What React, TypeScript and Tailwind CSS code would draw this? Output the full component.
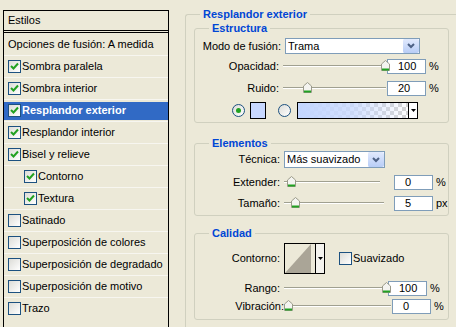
import React from "react";

const font = { fontFamily: '"Liberation Sans", Arial, sans-serif' };

function Check({ checked }: { checked: boolean }) {
  return (
    <div className="w-[13px] h-[13px] border border-[#1c5180] bg-gradient-to-br from-[#dcdcd7] to-white flex items-center justify-center shrink-0">
      {checked && (
        <svg width="9" height="9" viewBox="0 0 9 9">
          <path d="M1 4 L3.5 6.5 L8 1.5" stroke="#21a121" strokeWidth="2" fill="none" />
        </svg>
      )}
    </div>
  );
}

function Row({ label, checked, indent, active }: { label: string; checked?: boolean; indent?: boolean; active?: boolean }) {
  return (
    <div className="h-[22px] border-t border-[#f7f6f0] flex items-center">
      <div className={`h-[18px] w-full flex items-center gap-[1px] ${indent ? "pl-[20px]" : "pl-[4px]"} ${active ? "bg-[#316ac5] text-white font-bold" : "text-black"}`}>
        {checked !== undefined && <Check checked={checked} />}
        <span>{label}</span>
      </div>
    </div>
  );
}

function Thumb() {
  return (
    <svg width="9" height="11" viewBox="0 0 9 11" className="shrink-0">
      <path d="M0.5 10.5 V4 L4.5 0.5 L8.5 4 V10.5 Z" fill="#f4f4f0" stroke="#9a9a8a" />
      <path d="M1 9.5 H8" stroke="#21a121" strokeWidth="2" />
    </svg>
  );
}

function Slider({ pos, width = 105 }: { pos: number; width?: number }) {
  return (
    <div className="relative h-[12px]" style={{ width }}>
      <div className="absolute left-0 right-0 top-[5px] h-[2px] border-t border-[#a0a090] border-b border-b-white" />
      <div className="absolute top-0" style={{ left: pos }}>
        <Thumb />
      </div>
    </div>
  );
}

function Input({ value }: { value: string }) {
  return (
    <div className="w-[39px] h-[15px] bg-white border border-[#7f9db9] pl-[10px] flex items-center text-[11px] leading-none">
      {value}
    </div>
  );
}

function Arrow() {
  return (
    <div className="w-[17px] h-full bg-gradient-to-b from-[#e2eafd] to-[#b8cdf6] border-l border-white rounded-[2px] flex items-center justify-center">
      <svg width="8" height="6" viewBox="0 0 8 6">
        <path d="M1 1 L4 4 L7 1" stroke="#4d6185" strokeWidth="2" fill="none" />
      </svg>
    </div>
  );
}

function Group({ title, children, className }: { title: string; children: React.ReactNode; className?: string }) {
  return (
    <div className={`relative border border-[#d0d0bf] rounded-[3px] ${className ?? ""}`}>
      <div className="absolute left-[14px] -top-[8px] px-[3px] bg-[#ece9d8] text-[#0046d5] font-bold leading-[14px]">{title}</div>
      {children}
    </div>
  );
}

function DownTri() {
  return (
    <svg width="5" height="3" viewBox="0 0 5 3"><path d="M0 0 H5 L2.5 3 Z" fill="#000" /></svg>
  );
}

export default function App() {
  return (
    <div className="w-[456px] h-[327px] bg-[#ece9d8] overflow-hidden flex text-[11px]" style={font}>
      <div className="ml-[3px] mt-[10px] w-[166px] h-[330px] border border-black shrink-0 flex flex-col">
        <div className="h-[20px] pl-[4px] flex items-center border-b border-black">Estilos</div>
        <div className="h-[2px] border-b border-black" />
        <div className="h-[22px] pl-[4px] flex items-center">Opciones de fusión: A medida</div>
        <Row label="Sombra paralela" checked />
        <Row label="Sombra interior" checked />
        <Row label="Resplandor exterior" checked active />
        <Row label="Resplandor interior" checked />
        <Row label="Bisel y relieve" checked />
        <Row label="Contorno" checked indent />
        <Row label="Textura" checked indent />
        <Row label="Satinado" checked={false} />
        <Row label="Superposición de colores" checked={false} />
        <Row label="Superposición de degradado" checked={false} />
        <Row label="Superposición de motivo" checked={false} />
        <Row label="Trazo" checked={false} />
      </div>

      <div className="ml-[16px] mt-[14px] flex-1 relative border-l border-t border-[#d0d0bf] rounded-tl-[3px] pl-[8px] pt-[13px] pr-[10px]">
        <div className="absolute left-[14px] -top-[8px] px-[3px] bg-[#ece9d8] text-[#0046d5] font-bold leading-[14px]">Resplandor exterior</div>

        <Group title="Estructura" className="h-[95px]">
          <div className="flex items-center mt-[9px] h-[16px]">
            <div className="w-[90px] text-right pr-[4px]">Modo de fusión:</div>
            <div className="w-[135px] h-[16px] bg-white border border-[#7f9db9] flex items-center justify-between">
              <span className="pl-[2px]">Trama</span>
              <Arrow />
            </div>
          </div>
          <div className="flex items-center mt-[4px] h-[16px]">
            <div className="w-[88px] text-right pr-[4px]">Opacidad:</div>
            <Slider pos={98} width={103} />
            <div className="ml-[1px]"><Input value="100" /></div>
            <span className="ml-[3px]">%</span>
          </div>
          <div className="flex items-center mt-[6px] h-[16px]">
            <div className="w-[88px] text-right pr-[4px]">Ruido:</div>
            <Slider pos={20} width={103} />
            <div className="ml-[1px]"><Input value="20" /></div>
            <span className="ml-[3px]">%</span>
          </div>
          <div className="flex items-center mt-[6px] h-[17px] pl-[37px]">
            <div className="w-[13px] h-[13px] rounded-full border border-[#1c5180] bg-gradient-to-br from-[#dcdcd7] to-white flex items-center justify-center">
              <div className="w-[5px] h-[5px] rounded-full bg-[#21a121]" />
            </div>
            <div className="ml-[5px] w-[16px] h-[17px] bg-[#c8d8ff] border border-black" />
            <div className="ml-[12px] w-[13px] h-[13px] rounded-full border border-[#1c5180] bg-gradient-to-br from-[#dcdcd7] to-white" />
            <div className="ml-[6px] w-[121px] h-[17px] border border-black flex">
              <div className="flex-1 relative bg-[repeating-conic-gradient(#d4d4d4_0%_25%,#ffffff_0%_50%)] bg-[length:8px_8px]">
                <div className="absolute inset-0 bg-gradient-to-r from-[#c3d6ff] via-[#c8d9ff]/80 to-[#ffffff]/0" />
              </div>
              <div className="w-[9px] border-l border-black bg-white flex items-center justify-center">
                <DownTri />
              </div>
            </div>
          </div>
        </Group>

        <Group title="Elementos" className="mt-[20px] h-[73px]">
          <div className="flex items-center mt-[7px] h-[17px]">
            <div className="w-[89px] text-right pr-[4px]">Técnica:</div>
            <div className="w-[101px] h-[17px] bg-white border border-[#7f9db9] flex items-center justify-between">
              <span className="pl-[2px]">Más suavizado</span>
              <Arrow />
            </div>
          </div>
          <div className="flex items-center mt-[6px] h-[16px]">
            <div className="w-[89px] text-right pr-[4px]">Extender:</div>
            <Slider pos={3} width={96} />
            <div className="ml-[14px]"><Input value="0" /></div>
            <span className="ml-[3px]">%</span>
          </div>
          <div className="flex items-center mt-[5px] h-[16px]">
            <div className="w-[89px] text-right pr-[4px]">Tamaño:</div>
            <Slider pos={7} width={100} />
            <div className="ml-[10px]"><Input value="5" /></div>
            <span className="ml-[3px]">px</span>
          </div>
        </Group>

        <Group title="Calidad" className="mt-[17px] h-[87px]">
          <div className="flex items-center mt-[9px] h-[31px]">
            <div className="w-[89px] text-right pr-[4px]">Contorno:</div>
            <div className="w-[41px] h-[31px] border border-black flex">
              <div className="flex-1 bg-[#ece9d8] relative overflow-hidden">
                <svg width="31" height="29" viewBox="0 0 31 29" className="absolute inset-0"><path d="M0 29 L26 0 V29 Z" fill="#aaa597" /></svg>
              </div>
              <div className="w-[9px] border-l border-black flex items-center justify-center bg-[#f4f3ee]">
                <DownTri />
              </div>
            </div>
            <div className="ml-[14px]"><Check checked={false} /></div>
            <span className="ml-[1px]">Suavizado</span>
          </div>
          <div className="flex items-center mt-[6px] h-[16px]">
            <div className="w-[89px] text-right pr-[4px]">Rango:</div>
            <Slider pos={98} width={103} />
            <div className="ml-[1px]"><Input value="100" /></div>
            <span className="ml-[3px]">%</span>
          </div>
          <div className="flex items-center mt-[2px] h-[16px]">
            <div className="w-[89px] text-right pr-[0px]">Vibración:</div>
            <Slider pos={0} width={107} />
            <div className="ml-[1px]"><Input value="0" /></div>
            <span className="ml-[3px]">%</span>
          </div>
        </Group>
      </div>
    </div>
  );
}
